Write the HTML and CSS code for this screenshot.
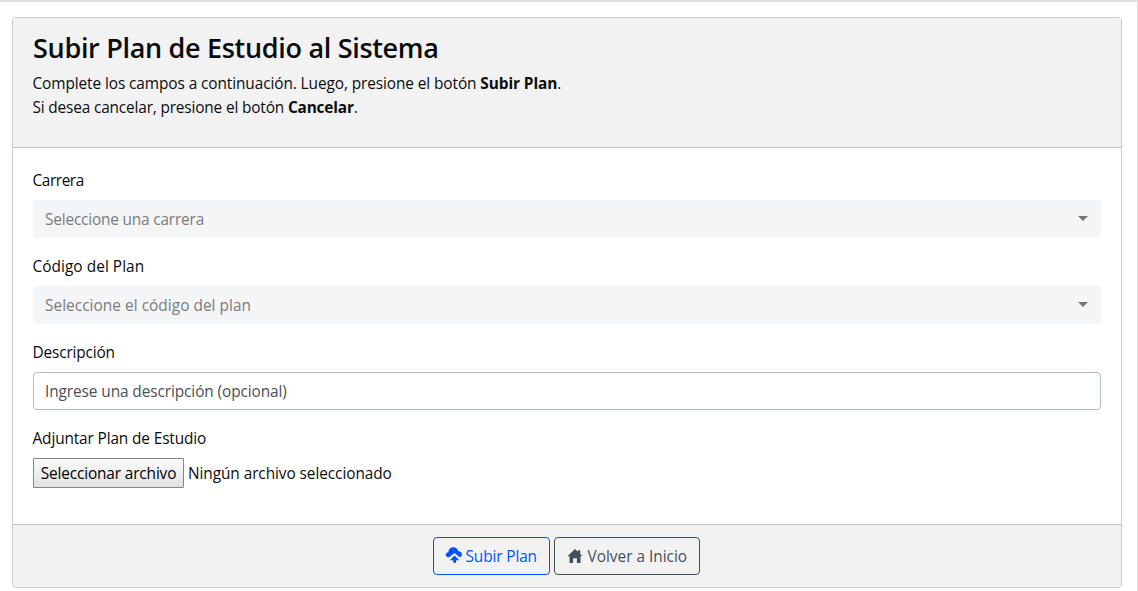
FILE: index.html
```html
<!DOCTYPE html>
<html lang="es">
<head>
<meta charset="utf-8">
<title>Subir Plan de Estudio</title>
<link rel="stylesheet" href="styles.css">
</head>
<body>
<main class="page">
  <section class="card">
    <header class="card-header">
      <h1 class="title">Subir Plan de Estudio al Sistema</h1>
      <p class="intro"><span class="intro-main">Complete los campos a continuación. Luego, presione el botón <strong>Subir Plan</strong>.</span><br><span class="intro-cancel">Si desea cancelar, presione el botón <strong>Cancelar</strong>.</span></p>
    </header>
    <form class="card-body">
      <div class="field">
        <label class="label label-career">Carrera</label>
        <div class="select select-career"><span>Seleccione una carrera</span><i class="caret"></i></div>
      </div>
      <div class="field">
        <label class="label label-code">Código del Plan</label>
        <div class="select select-code"><span>Seleccione el código del plan</span><i class="caret"></i></div>
      </div>
      <div class="field">
        <label class="label label-description">Descripción</label>
        <div class="input"><span>Ingrese una descripción (opcional)</span></div>
      </div>
      <div class="field">
        <label class="label label-file">Adjuntar Plan de Estudio</label>
        <div class="file"><button type="button" class="file-button">Seleccionar archivo</button><span class="file-name">Ningún archivo seleccionado</span></div>
      </div>
    </form>
    <footer class="card-footer">
      <button type="button" class="btn btn-primary">
        <svg class="icon-upload" width="18" height="18" viewBox="0 0 18 18"><path fill="currentColor" d="M4.200 11.200H3.200C1.700 11.200.8 10.300.8 9C.8 7.500 1.900 6.500 3.300 6.300C3.500 3.200 5.300 1.200 8.200 1.200C10.800 1.200 12.500 2.600 13.200 5C15.600 5.200 17 6.700 17 8.600C17 10.200 16 11.100 14.600 11.200L9.500 7.100ZM9.500 9.500L14.300 14.200H11V16.700H8.200V14.200H4.800Z"/></svg>
        <span>Subir Plan</span>
      </button>
      <button type="button" class="btn btn-secondary">
        <svg class="icon-home" width="16" height="16" viewBox="0 0 16 16"><path fill="currentColor" d="M8 1L10.900 3.700V2.200H13.200V5.900L15.500 8.200H13.500V15H9.900V10.200H6.100V15H2.500V8.200H.5Z"/></svg>
        <span>Volver a Inicio</span>
      </button>
    </footer>
  </section>
</main>
</body>
</html>
```

FILE: styles.css
```css
* { box-sizing: border-box; }
body {
  margin: 0;
  height: 591px;
  overflow: hidden;
  background: #fff;
  color: #0b0c0e;
  font: 15.4px/24px "Open Sans", sans-serif;
}
.page {
  height: 591px;
  border-top: 2px solid #dfdfdf;
  border-right: 1px solid #dcdcdc;
  padding: 15px 15px 0 12px;
}
.card { border: 1px solid #cacaca; border-radius: 4px; overflow: hidden; }
.card-header { height: 130px; padding: 13px 20px 0; background: #f2f2f2; border-bottom: 1px solid #c3c3c3; }
.title { margin: 0 0 7px; font-size: 27px; line-height: 34px; font-weight: 600; letter-spacing: -.31px; }
.intro { margin: 0 0 0 -.5px; white-space: nowrap; }
.intro-main { letter-spacing: -.09px; }
.intro-cancel { letter-spacing: -.16px; }
.card-body { height: 376px; padding: 21px 20px 0; }
.field { margin-bottom: 16px; }
.label { display: block; margin: 0 0 7px -.5px; }
.field + .field .label { padding-top: 1px; }
.label-career { letter-spacing: -.42px; }
.label-code { letter-spacing: .05px; }
.label-description { letter-spacing: -.15px; }
.label-file { letter-spacing: -.13px; }
.select, .input { display: flex; align-items: center; justify-content: space-between; height: 38px; padding: 2px 13px 0 12px; border-radius: 4px; }
.select { background: #f4f5f7; color: #7b7b7b; }
.select-career { letter-spacing: -.18px; }
.select-code { letter-spacing: .04px; }
.input { border: 1px solid #b3bac1; color: #495057; padding-left: 11px; letter-spacing: -.09px; }
.caret { margin-bottom: 3px; border: 5px solid transparent; border-top-color: #747474; border-bottom: 0; }
.file { display: flex; align-items: center; gap: 4px; height: 30px; }
.file-button { width: 151px; height: 30px; padding: 2px 0 0; border: 1px solid #858585; border-radius: 1px; background: linear-gradient(#fafafa, #e2e2e2); color: #000; font: inherit; letter-spacing: -.14px; }
.file-name { padding-top: 2px; letter-spacing: -.07px; }
.card-footer { display: flex; justify-content: center; gap: 4px; height: 63px; padding: 12px 2px 0 0; background: #f2f2f2; border-top: 1px solid #c3c3c3; }
.btn { display: flex; align-items: center; height: 38px; border: 1px solid; border-radius: 4px; background: transparent; font: inherit; }
.btn span { padding-top: 2px; white-space: nowrap; }
.btn svg { flex: none; }
.btn-primary { width: 117px; padding: 0 0 0 11px; gap: 3px; color: #0052ff; letter-spacing: -.12px; }
.icon-upload { margin-top: -2px; }
.btn-secondary { width: 146px; padding: 0 0 0 12px; gap: 5px; color: #444f5b; }
```
